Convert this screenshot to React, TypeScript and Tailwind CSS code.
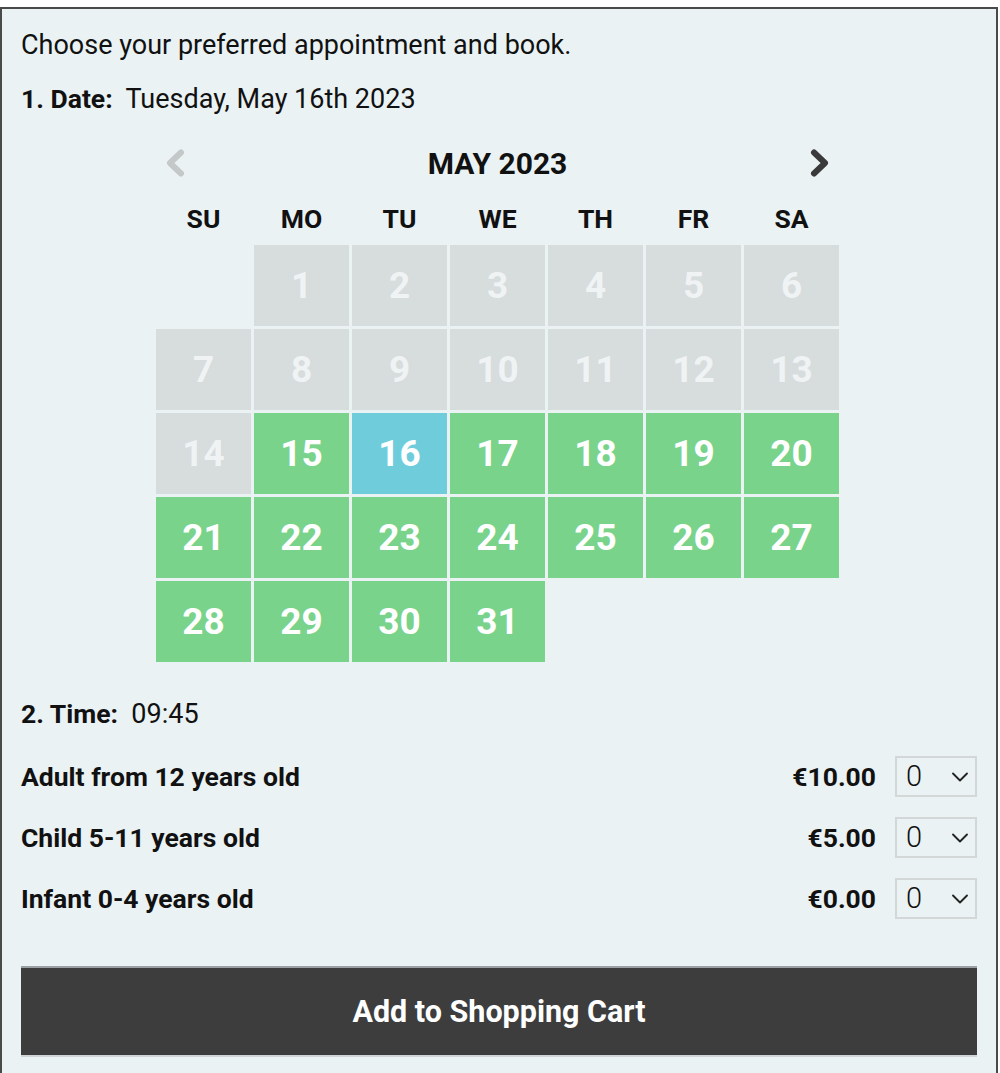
import { ChevronDown } from "lucide-react";

type Cell = { day: number; state: "past" | "open" | "selected" } | null;

const buildCells = (): Cell[] => {
  const cells: Cell[] = [null];
  for (let d = 1; d <= 31; d++) {
    if (d < 15) cells.push({ day: d, state: "past" });
    else if (d === 16) cells.push({ day: d, state: "selected" });
    else cells.push({ day: d, state: "open" });
  }
  return cells;
};

const dayNames = ["SU", "MO", "TU", "WE", "TH", "FR", "SA"];

const tickets = [
  { label: "Adult from 12 years old", price: "€10.00" },
  { label: "Child 5-11 years old", price: "€5.00" },
  { label: "Infant 0-4 years old", price: "€0.00" },
];

const Arrow = ({ dir, color }: { dir: "left" | "right"; color: string }) => (
  <svg width="22" height="28" viewBox="0 0 22 28" className={color}>
    <path
      d={dir === "left" ? "M17 3.5 L6 14 L17 24.5" : "M5 3.5 L16 14 L5 24.5"}
      fill="none"
      stroke="currentColor"
      strokeWidth="6"
      strokeLinecap="round"
      strokeLinejoin="round"
    />
  </svg>
);

const Calendar = () => {
  const cells = buildCells();
  return (
    <div className="ml-[135px] w-[683px]">
      <div className="flex h-[52px] items-center justify-between pl-[8px] pr-[8px]">
        <Arrow dir="left" color="text-[#c4c8c9]" />
        <div className="text-[30px] font-bold text-[#111]">MAY 2023</div>
        <Arrow dir="right" color="text-[#3a3a3a]" />
      </div>
      <div className="mt-[4px] grid h-[52px] grid-cols-7 items-center gap-x-[3px]">
        {dayNames.map((n) => (
          <div key={n} className="text-center text-[26.5px] font-bold text-[#111]">
            {n}
          </div>
        ))}
      </div>
      <div className="grid grid-cols-7 gap-[3px]">
        {cells.map((c, i) =>
          c === null ? (
            <div key={i} className="h-[81px]" />
          ) : (
            <div
              key={i}
              className={
                "flex h-[81px] items-center justify-center text-[37px] font-bold " +
                (c.state === "past"
                  ? "bg-[#d7dcdd] text-[#eff3f4]"
                  : c.state === "selected"
                  ? "bg-[#6fcddb] text-white"
                  : "bg-[#79d38b] text-white")
              }
            >
              {c.day}
            </div>
          )
        )}
      </div>
    </div>
  );
};

export default function App() {
  return (
    <div className="bg-white pt-[7px] font-['Roboto',sans-serif]">
      <div className="w-[998px] border-x-2 border-t-2 border-[#4a4a4a] bg-[#eaf2f4] px-[19px] pb-[16px] pt-[18px] text-[#111]">
        <p className="text-[27px] leading-[36px]">Choose your preferred appointment and book.</p>
        <p className="mt-[18px] text-[27px] leading-[36px]">
          <span className="text-[26.5px] font-bold">1. Date:</span>&nbsp; Tuesday, May 16th 2023
        </p>
        <div className="mt-[20px]">
          <Calendar />
        </div>
        <p className="mt-[34px] text-[27px] leading-[36px]">
          <span className="text-[26.5px] font-bold">2. Time:</span>&nbsp; 09:45
        </p>
        <div className="mt-[24px] flex flex-col gap-[20px]">
          {tickets.map((t) => (
            <div key={t.label} className="flex h-[41px] items-center">
              <div className="flex-1 text-[26.5px] font-bold">{t.label}</div>
              <div className="mr-[19px] text-[26.5px] font-bold">{t.price}</div>
              <div className="flex h-[41px] w-[82px] items-center justify-between border-2 border-[#d4d7d8] pl-[9px] pr-[1px]">
                <span className="text-[29px] font-light leading-none">0</span>
                <ChevronDown size={28} strokeWidth={1.6} className="text-[#222]" />
              </div>
            </div>
          ))}
        </div>
        <button className="mt-[47px] flex h-[91px] w-full items-center justify-center border-t-2 border-b-2 border-t-[#9aa0a3] border-b-[#d0d4d6] bg-[#3d3d3d] text-[30.5px] font-bold text-white">
          Add to Shopping Cart
        </button>
      </div>
    </div>
  );
}
